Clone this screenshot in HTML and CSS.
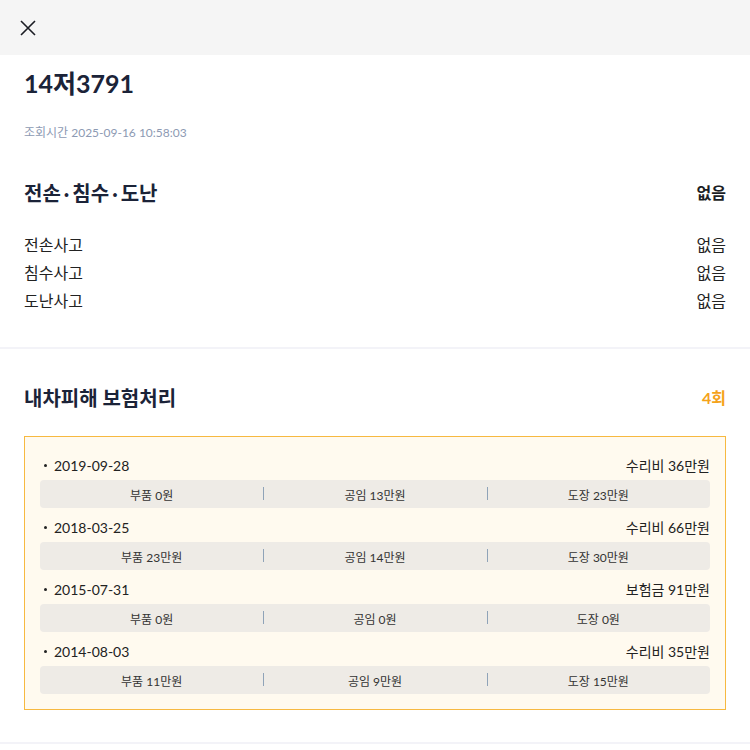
FILE: index.html
```html
<!DOCTYPE html>
<html lang="ko">
<head>
    <meta charset="UTF-8">
    <meta name="viewport" content="width=device-width, initial-scale=1.0">
    <title>차량 이력 조회</title>
    <link rel="stylesheet" href="styles.css">
</head>
<body>
    <header class="topbar">
        <button class="close-btn" aria-label="닫기">
            <svg width="16" height="16" viewBox="0 0 16 16">
                <path d="M1 1 L15 15 M15 1 L1 15" stroke="#1b1d24" stroke-width="1.6" fill="none"/>
            </svg>
        </button>
    </header>

    <div class="summary">
        <h1 class="plate">14저3791</h1>
        <p class="checked-at">조회시간 2025-09-16 10:58:03</p>
    </div>

    <section class="block">
        <div class="block-head">
            <h2>전손<span class="dot">·</span>침수<span class="dot">·</span>도난</h2>
            <span class="head-value">없음</span>
        </div>
        <div class="row"><span>전손사고</span><span>없음</span></div>
        <div class="row"><span>침수사고</span><span>없음</span></div>
        <div class="row"><span>도난사고</span><span>없음</span></div>
    </section>

    <section class="block">
        <div class="block-head">
            <h2>내차피해 보험처리</h2>
            <span class="head-value count">4회</span>
        </div>
        <div class="claims" id="claims"></div>
    </section>

    <script>
        const claims = [
            { date: "2019-09-28", total: "수리비 36만원", parts: ["부품 0원", "공임 13만원", "도장 23만원"] },
            { date: "2018-03-25", total: "수리비 66만원", parts: ["부품 23만원", "공임 14만원", "도장 30만원"] },
            { date: "2015-07-31", total: "보험금 91만원", parts: ["부품 0원", "공임 0원", "도장 0원"] },
            { date: "2014-08-03", total: "수리비 35만원", parts: ["부품 11만원", "공임 9만원", "도장 15만원"] }
        ];

        const list = document.getElementById("claims");
        claims.forEach(claim => {
            const item = document.createElement("div");
            item.className = "claim";
            item.innerHTML = `
                <div class="claim-top">
                    <span class="claim-date">${claim.date}</span>
                    <span>${claim.total}</span>
                </div>
                <div class="claim-parts">
                    ${claim.parts.map(p => `<span>${p}</span>`).join("")}
                </div>`;
            list.appendChild(item);
        });
    </script>
</body>
</html>
```

FILE: styles.css
```css
body {
    margin: 0;
    font-family: Lato, "Noto Sans CJK KR", sans-serif;
    color: #222;
    background: #fff;
}
h1, h2, p {
    margin: 0;
}
.topbar {
    height: 55px;
    background: #f5f5f5;
    display: flex;
    align-items: center;
    padding-left: 20px;
}
.close-btn {
    border: none;
    background: none;
    padding: 0;
    width: 16px;
    height: 16px;
    cursor: pointer;
}
.summary {
    padding: 11px 24px 0;
}
.plate {
    font-size: 25px;
    line-height: 34px;
    font-weight: 700;
    color: #1b2338;
}
.checked-at {
    margin-top: 23px;
    font-size: 12px;
    line-height: 20px;
    color: #8d9ab3;
}
.block {
    padding: 35px 24px 32px;
    border-bottom: 2px solid #f3f3f8;
}
.block + .block {
    padding-top: 34px;
}
.block-head {
    display: flex;
    justify-content: space-between;
    align-items: center;
    height: 28px;
    margin-bottom: 25px;
}
.block-head h2 {
    font-size: 20px;
    font-weight: 700;
    color: #1b2338;
}
.dot {
    margin: 0 3px;
}
.head-value {
    font-size: 16px;
    font-weight: 700;
    color: #1b1d24;
}
.head-value.count {
    color: #f5a31a;
}
.row {
    display: flex;
    justify-content: space-between;
    font-size: 16px;
    line-height: 28px;
    color: #222;
}
.claims {
    border: 1px solid #f7b940;
    background: #fffaef;
    padding: 17px 15px 15px;
    display: flex;
    flex-direction: column;
    gap: 8px;
}
.claim-top {
    display: flex;
    justify-content: space-between;
    align-items: center;
    height: 22px;
    font-size: 14px;
    margin-bottom: 4px;
}
.claim-date {
    display: flex;
    align-items: center;
}
.claim-date::before {
    content: "";
    width: 3px;
    height: 3px;
    border-radius: 50%;
    background: #222;
    margin: 0 7px 0 4px;
}
.claim-parts {
    display: grid;
    grid-template-columns: 1fr 1fr 1fr;
    height: 28px;
    align-items: center;
    background: #eeebe6;
    border-radius: 4px;
    font-size: 12px;
    color: #333;
}
.claim-parts span {
    position: relative;
    text-align: center;
}
.claim-parts span + span::before {
    content: "";
    position: absolute;
    left: 0;
    top: 1px;
    height: 13px;
    border-left: 1px solid #8fa3b8;
}
```
